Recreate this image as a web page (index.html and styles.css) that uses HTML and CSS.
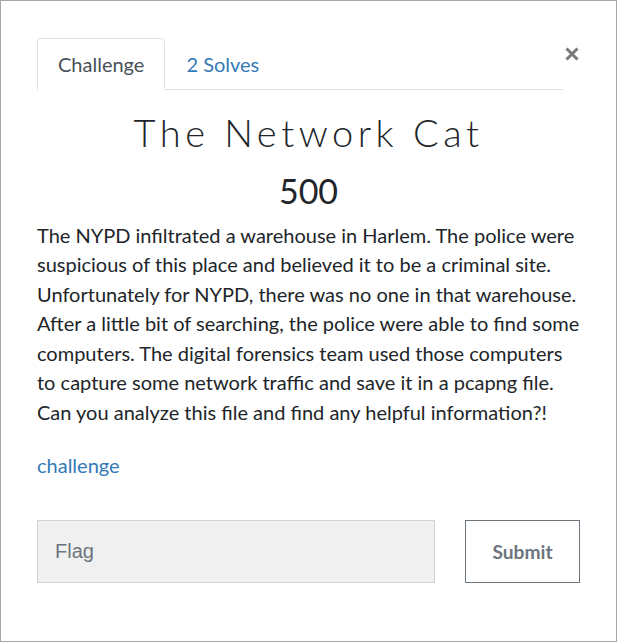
FILE: index.html
```html
<!DOCTYPE html>
<html>
<head>
<meta charset="utf-8">
<link rel="stylesheet" href="styles.css">
</head>
<body>
<div class="modal">
  <div class="header">
    <ul class="tabs">
      <li class="tab active">Challenge</li>
      <li class="tab link">2 Solves</li>
    </ul>
    <button class="close" aria-label="Close">
      <svg width="14" height="14" viewBox="0 0 14 14"><path d="M1.5 1.5 L12.5 12.5 M12.5 1.5 L1.5 12.5" stroke="#7a7a7a" stroke-width="3" fill="none"/></svg>
    </button>
  </div>
  <h2 class="title">The Network Cat</h2>
  <h3 class="value">500</h3>
  <p class="desc">The NYPD infiltrated a warehouse in Harlem. The police were suspicious of this place and believed it to be a criminal site. Unfortunately for NYPD, there was no one in that warehouse. After a little bit of searching, the police were able to find some computers. The digital forensics team used those computers to capture some network traffic and save it in a pcapng file. Can you analyze this file and find any helpful information?!</p>
  <p class="files"><a class="file-link" href="#">challenge</a></p>
  <div class="form">
    <input class="flag" type="text" placeholder="Flag">
    <button class="submit">Submit</button>
  </div>
</div>
</body>
</html>
```
FILE: styles.css
```css
html, body {
  margin: 0;
  padding: 0;
}
body {
  font-family: Lato, "Liberation Sans", sans-serif;
  color: #212529;
  background: #fff;
}
.modal {
  box-sizing: border-box;
  width: 617px;
  height: 642px;
  border: 1px solid #a7a7a7;
  padding: 37px 36px 0 36px;
}
.header {
  display: flex;
  align-items: flex-start;
}
.tabs {
  flex: 1;
  display: flex;
  list-style: none;
  margin: 0;
  padding: 0;
  border-bottom: 1px solid #dee2e6;
}
.tab {
  font-size: 20px;
  line-height: 29px;
  padding: 11px 20px 10px 20px;
  border: 1px solid transparent;
  border-radius: 4px 4px 0 0;
  margin-bottom: -1px;
}
.tab.active {
  color: #495057;
  border-color: #dee2e6 #dee2e6 #fff;
  background: #fff;
}
.tab.link {
  color: #337ab7;
}
.close {
  width: 17px;
  margin: 9px 0 0 0;
  padding: 0 0 0 2px;
  border: 0;
  background: none;
  display: flex;
  line-height: 0;
}
.title {
  margin: 20px 0 0 0;
  text-align: center;
  font-family: Lato, sans-serif;
  font-weight: 300;
  font-size: 38px;
  line-height: 45.6px;
  letter-spacing: 4.5px;
  color: #212529;
}
.value {
  margin: 15px 0 0 0;
  text-align: center;
  font-weight: 400;
  font-size: 34px;
  line-height: 40.8px;
  color: #212529;
}
.desc {
  margin: 9.5px 0 0 0;
  font-size: 20px;
  line-height: 29.5px;
}
.files {
  margin: 23.5px 0 0 0;
  font-size: 20px;
  line-height: 29.5px;
}
.file-link {
  color: #337ab7;
  text-decoration: none;
}
.form {
  display: flex;
  gap: 30px;
  margin-top: 40px;
}
.flag {
  box-sizing: border-box;
  width: 398px;
  height: 63px;
  background: #f0f0f0;
  border: 1px solid #ced4da;
  padding: 0 17px;
  font-family: "Liberation Sans", Arial, sans-serif;
  font-size: 20px;
  color: #495057;
  outline: none;
}
.flag::placeholder {
  color: #6c757d;
}
.submit {
  box-sizing: border-box;
  width: 115px;
  height: 63px;
  background: #fff;
  border: 1px solid #6c757d;
  color: #6c757d;
  font-family: Lato, sans-serif;
  font-weight: 700;
  font-size: 19.2px;
  padding: 0;
}
```
